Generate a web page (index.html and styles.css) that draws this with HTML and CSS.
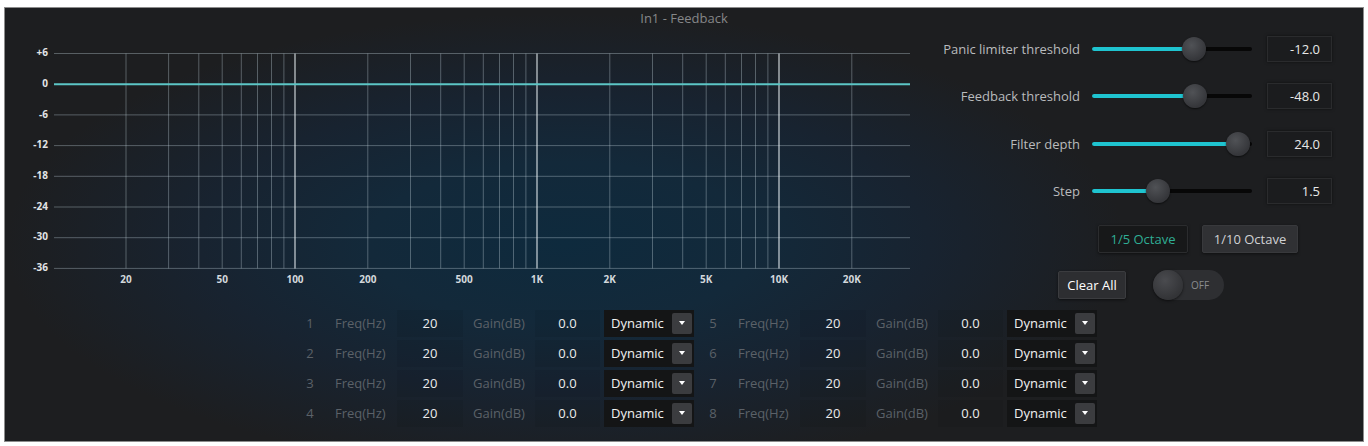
FILE: index.html
```html
<!DOCTYPE html>
<html lang="en">
<head>
    <meta charset="UTF-8">
    <meta name="viewport" content="width=device-width, initial-scale=1.0">
    <title>In1 - Feedback</title>
    <link rel="stylesheet" href="styles.css">
</head>
<body>
    <div class="panel">
        <div class="title">In1 - Feedback</div>
        <div class="main">
            <svg class="graph" width="900" height="252" viewBox="0 0 900 252">
                <g class="grid">
                    <line x1="40" y1="17.5" x2="896" y2="17.5"/>
                    <line x1="40" y1="78.9" x2="896" y2="78.9"/>
                    <line x1="40" y1="109.6" x2="896" y2="109.6"/>
                    <line x1="40" y1="140.3" x2="896" y2="140.3"/>
                    <line x1="40" y1="171" x2="896" y2="171"/>
                    <line x1="40" y1="201.7" x2="896" y2="201.7"/>
                    <line x1="40" y1="232.4" x2="896" y2="232.4"/>
                    <line x1="112" y1="17.5" x2="112" y2="232.4"/>
                    <line x1="154.6" y1="17.5" x2="154.6" y2="232.4"/>
                    <line x1="184.8" y1="17.5" x2="184.8" y2="232.4"/>
                    <line x1="208.2" y1="17.5" x2="208.2" y2="232.4"/>
                    <line x1="227.3" y1="17.5" x2="227.3" y2="232.4"/>
                    <line x1="243.5" y1="17.5" x2="243.5" y2="232.4"/>
                    <line x1="257.5" y1="17.5" x2="257.5" y2="232.4"/>
                    <line x1="269.9" y1="17.5" x2="269.9" y2="232.4"/>
                    <line x1="353.8" y1="17.5" x2="353.8" y2="232.4"/>
                    <line x1="396.5" y1="17.5" x2="396.5" y2="232.4"/>
                    <line x1="426.7" y1="17.5" x2="426.7" y2="232.4"/>
                    <line x1="450.2" y1="17.5" x2="450.2" y2="232.4"/>
                    <line x1="469.3" y1="17.5" x2="469.3" y2="232.4"/>
                    <line x1="485.5" y1="17.5" x2="485.5" y2="232.4"/>
                    <line x1="499.5" y1="17.5" x2="499.5" y2="232.4"/>
                    <line x1="511.9" y1="17.5" x2="511.9" y2="232.4"/>
                    <line x1="595.8" y1="17.5" x2="595.8" y2="232.4"/>
                    <line x1="638.5" y1="17.5" x2="638.5" y2="232.4"/>
                    <line x1="668.7" y1="17.5" x2="668.7" y2="232.4"/>
                    <line x1="692.2" y1="17.5" x2="692.2" y2="232.4"/>
                    <line x1="711.3" y1="17.5" x2="711.3" y2="232.4"/>
                    <line x1="727.5" y1="17.5" x2="727.5" y2="232.4"/>
                    <line x1="741.5" y1="17.5" x2="741.5" y2="232.4"/>
                    <line x1="753.9" y1="17.5" x2="753.9" y2="232.4"/>
                    <line x1="837.8" y1="17.5" x2="837.8" y2="232.4"/>
                </g>
                <g class="grid-major">
                    <line x1="281" y1="17.5" x2="281" y2="232.4"/>
                    <line x1="523" y1="17.5" x2="523" y2="232.4"/>
                    <line x1="765" y1="17.5" x2="765" y2="232.4"/>
                </g>
                <line class="curve" x1="40" y1="48.2" x2="896" y2="48.2"/>
                <g class="y-labels">
                    <text x="34" y="17.5">+6</text>
                    <text x="34" y="48.2">0</text>
                    <text x="34" y="78.9">-6</text>
                    <text x="34" y="109.6">-12</text>
                    <text x="34" y="140.3">-18</text>
                    <text x="34" y="171">-24</text>
                    <text x="34" y="201.7">-30</text>
                    <text x="34" y="232.4">-36</text>
                </g>
                <g class="x-labels">
                    <text x="112" y="244">20</text>
                    <text x="208.2" y="244">50</text>
                    <text x="281" y="244">100</text>
                    <text x="353.8" y="244">200</text>
                    <text x="450.2" y="244">500</text>
                    <text x="523" y="244">1K</text>
                    <text x="595.8" y="244">2K</text>
                    <text x="692.2" y="244">5K</text>
                    <text x="765" y="244">10K</text>
                    <text x="837.8" y="244">20K</text>
                </g>
            </svg>

            <div class="controls">
                <div class="param">
                    <span class="param-label">Panic limiter threshold</span>
                    <div class="slider"><div class="fill" style="width: 64%"></div><div class="knob" style="left: 64%"></div></div>
                    <div class="value-box">-12.0</div>
                </div>
                <div class="param">
                    <span class="param-label">Feedback threshold</span>
                    <div class="slider"><div class="fill" style="width: 64.5%"></div><div class="knob" style="left: 64.5%"></div></div>
                    <div class="value-box">-48.0</div>
                </div>
                <div class="param">
                    <span class="param-label">Filter depth</span>
                    <div class="slider"><div class="fill" style="width: 91.5%"></div><div class="knob" style="left: 91.5%"></div></div>
                    <div class="value-box">24.0</div>
                </div>
                <div class="param">
                    <span class="param-label">Step</span>
                    <div class="slider"><div class="fill" style="width: 41.5%"></div><div class="knob" style="left: 41.5%"></div></div>
                    <div class="value-box">1.5</div>
                </div>
                <div class="octaves">
                    <button class="btn btn-octave active">1/5 Octave</button>
                    <button class="btn btn-octave">1/10 Octave</button>
                </div>
                <div class="actions">
                    <button class="btn btn-clear">Clear All</button>
                    <div class="toggle"><span class="toggle-knob"></span><span class="toggle-text">OFF</span></div>
                </div>
            </div>
        </div>

        <div class="filters">
            <div class="filter-col">
                <div class="filter-row"><span class="num">1</span><span class="lbl">Freq(Hz)</span><span class="val">20</span><span class="lbl lbl-gain">Gain(dB)</span><span class="val">0.0</span><div class="select"><span>Dynamic</span><span class="arrow"></span></div></div>
                <div class="filter-row"><span class="num">2</span><span class="lbl">Freq(Hz)</span><span class="val">20</span><span class="lbl lbl-gain">Gain(dB)</span><span class="val">0.0</span><div class="select"><span>Dynamic</span><span class="arrow"></span></div></div>
                <div class="filter-row"><span class="num">3</span><span class="lbl">Freq(Hz)</span><span class="val">20</span><span class="lbl lbl-gain">Gain(dB)</span><span class="val">0.0</span><div class="select"><span>Dynamic</span><span class="arrow"></span></div></div>
                <div class="filter-row"><span class="num">4</span><span class="lbl">Freq(Hz)</span><span class="val">20</span><span class="lbl lbl-gain">Gain(dB)</span><span class="val">0.0</span><div class="select"><span>Dynamic</span><span class="arrow"></span></div></div>
            </div>
            <div class="filter-col">
                <div class="filter-row"><span class="num">5</span><span class="lbl">Freq(Hz)</span><span class="val">20</span><span class="lbl lbl-gain">Gain(dB)</span><span class="val">0.0</span><div class="select"><span>Dynamic</span><span class="arrow"></span></div></div>
                <div class="filter-row"><span class="num">6</span><span class="lbl">Freq(Hz)</span><span class="val">20</span><span class="lbl lbl-gain">Gain(dB)</span><span class="val">0.0</span><div class="select"><span>Dynamic</span><span class="arrow"></span></div></div>
                <div class="filter-row"><span class="num">7</span><span class="lbl">Freq(Hz)</span><span class="val">20</span><span class="lbl lbl-gain">Gain(dB)</span><span class="val">0.0</span><div class="select"><span>Dynamic</span><span class="arrow"></span></div></div>
                <div class="filter-row"><span class="num">8</span><span class="lbl">Freq(Hz)</span><span class="val">20</span><span class="lbl lbl-gain">Gain(dB)</span><span class="val">0.0</span><div class="select"><span>Dynamic</span><span class="arrow"></span></div></div>
            </div>
        </div>
    </div>
</body>
</html>
```

FILE: styles.css
```css
body {
    margin: 0;
    background-color: #ffffff;
    font-family: "Open Sans", "Noto Sans", sans-serif;
    font-size: 13px;
}
.panel {
    box-sizing: border-box;
    width: 1360px;
    height: 435px;
    margin: 7px 0 0 4px;
    border: 1px solid #8c8c8c;
    background-color: #1d1e20;
    background-image: radial-gradient(ellipse 560px 230px at 560px 235px, #0e2a3d 0%, #13293a 35%, #182330 65%, rgba(29, 30, 32, 0) 100%);
    display: flex;
    flex-direction: column;
}
.title {
    height: 20px;
    line-height: 20px;
    text-align: center;
    color: #858789;
    font-size: 13px;
}
.main {
    display: flex;
    align-items: flex-start;
}
.graph {
    display: block;
    margin: 8px 0 0 9px;
    flex: none;
}
.grid line {
    stroke: rgba(195, 210, 220, 0.36);
    stroke-width: 1;
}
.grid-major line {
    stroke: rgba(235, 242, 246, 0.85);
    stroke-width: 1.2;
}
.curve {
    stroke: #5cc6c6;
    stroke-width: 2;
}
.y-labels text {
    fill: #e2e4e6;
    font-size: 10px;
    font-weight: bold;
    text-anchor: end;
    dominant-baseline: middle;
}
.x-labels text {
    fill: #d3d8dc;
    font-size: 10px;
    font-weight: bold;
    text-anchor: middle;
    dominant-baseline: middle;
}
.controls {
    width: 397px;
    margin: 8px 0 0 auto;
    margin-right: 31px;
    display: flex;
    flex-direction: column;
}
.param {
    display: flex;
    align-items: center;
    height: 26px;
    margin-bottom: 21.3px;
}
.param-label {
    flex: 1;
    text-align: right;
    color: #b9bbbd;
    margin-right: 12px;
    white-space: nowrap;
}
.slider {
    position: relative;
    width: 160px;
    height: 4px;
    border-radius: 2px;
    background-color: #070707;
    margin-right: 15px;
}
.fill {
    height: 100%;
    border-radius: 2px;
    background-color: #1fc4d0;
}
.knob {
    position: absolute;
    top: 50%;
    width: 24px;
    height: 24px;
    margin: -12px 0 0 -12px;
    border-radius: 50%;
    background: radial-gradient(circle at 40% 35%, #505256, #35363a 70%);
    box-shadow: 0 1px 2px rgba(0, 0, 0, 0.6);
}
.value-box {
    box-sizing: border-box;
    width: 65px;
    height: 26px;
    line-height: 24px;
    padding-right: 11px;
    text-align: right;
    color: #e8e8e8;
    background-color: #1b1c1e;
    border: 1px solid #2a2b2d;
    box-shadow: 0 0 3px rgba(0, 0, 0, 0.5);
}
.btn {
    font-family: inherit;
    font-size: 13px;
    cursor: pointer;
    border-radius: 2px;
    padding: 0;
}
.octaves {
    display: flex;
    gap: 14px;
    padding-left: 163px;
    margin-top: -0.3px;
}
.btn-octave {
    height: 28px;
    width: 90px;
    background-color: #303134;
    border: 1px solid #38393c;
    color: #d0d2d4;
    box-shadow: 0 1px 3px rgba(0, 0, 0, 0.5);
}
.btn-octave + .btn-octave {
    width: 96px;
}
.btn-octave.active {
    background-color: #171819;
    border-color: #2b2c2e;
    color: #2fae95;
}
.actions {
    display: flex;
    align-items: center;
    gap: 27px;
    padding-left: 123px;
    margin-top: 17px;
}
.btn-clear {
    height: 28px;
    width: 68px;
    background-color: #2d2e31;
    border: 1px solid #3b3c3f;
    color: #ffffff;
    box-shadow: 0 1px 3px rgba(0, 0, 0, 0.5);
}
.toggle {
    position: relative;
    width: 71px;
    height: 30px;
    border-radius: 15px;
    background-color: #2e2f32;
    display: flex;
    align-items: center;
}
.toggle-knob {
    width: 30px;
    height: 30px;
    border-radius: 50%;
    background: radial-gradient(circle at 40% 35%, #4a4b4f, #333437 70%);
    box-shadow: 0 1px 3px rgba(0, 0, 0, 0.6);
}
.toggle-text {
    margin-left: 8px;
    color: #8a8c8f;
    font-size: 10px;
}
.filters {
    display: flex;
    padding-left: 295px;
    margin-top: 10px;
}
.filter-col {
    width: 403px;
    display: flex;
    flex-direction: column;
    gap: 3px;
}
.filter-row {
    display: grid;
    grid-template-columns: 20px 77px 66px 72px 65px 90px;
    align-items: center;
    height: 27px;
}
.num {
    text-align: center;
    color: #5b6168;
}
.lbl {
    padding-left: 15px;
    color: #5b6168;
    white-space: nowrap;
}
.lbl-gain {
    padding-left: 10px;
}
.val {
    height: 27px;
    line-height: 27px;
    text-align: center;
    color: #ececec;
    font-size: 13px;
    background-color: rgba(0, 0, 0, 0.06);
}
.select {
    margin-left: 4px;
    height: 27px;
    width: 90px;
    box-sizing: border-box;
    display: flex;
    align-items: center;
    justify-content: space-between;
    padding: 0 2px 0 7px;
    background-color: #141516;
    color: #f2f2f2;
    font-size: 13px;
}
.arrow {
    position: relative;
    width: 20px;
    height: 21px;
    border-radius: 2px;
    background-color: #3b3c3f;
}
.arrow::after {
    content: "";
    position: absolute;
    left: 7px;
    top: 8px;
    border-left: 3px solid transparent;
    border-right: 3px solid transparent;
    border-top: 4px solid #ffffff;
}
```
